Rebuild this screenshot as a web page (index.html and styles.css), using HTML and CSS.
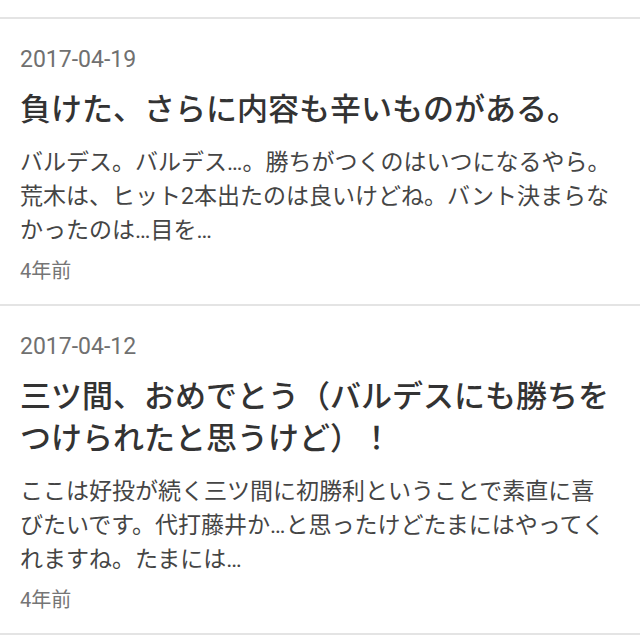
FILE: index.html
```html
<!doctype html>
<html lang="ja">
<head>
    <meta charset="UTF-8">
    <title>記事一覧</title>
    <link rel="stylesheet" href="styles.css">
</head>
<body>
    <div class="top"></div>
    <div class="list">
        <div class="entry">
            <div class="date">2017-04-19</div>
            <h2 class="title">負けた、さらに内容も辛いものがある。</h2>
            <p class="summary">バルデス。バルデス…。勝ちがつくのはいつになるやら。荒木は、ヒット2本出たのは良いけどね。バント決まらなかったのは…目を…</p>
            <div class="ago">4年前</div>
        </div>
        <div class="entry">
            <div class="date">2017-04-12</div>
            <h2 class="title">三ツ間、おめでとう（バルデスにも勝ちをつけられたと思うけど）！</h2>
            <p class="summary">ここは好投が続く三ツ間に初勝利ということで素直に喜びたいです。代打藤井か…と思ったけどたまにはやってくれますね。たまには…</p>
            <div class="ago">4年前</div>
        </div>
    </div>
</body>
</html>
```

FILE: styles.css
```css
* {
    margin: 0;
    padding: 0;
    box-sizing: border-box;
}
body {
    background: #fff;
    font-family: Roboto, 'Noto Sans CJK JP', sans-serif;
    overflow: hidden;
}
.top {
    height: 19px;
    border-bottom: 2px solid #e4e4e4;
}
.entry {
    padding: 26px 24px 18px 20px;
    border-bottom: 2px solid #e4e4e4;
}
.date {
    font-size: 23px;
    line-height: 30px;
    color: #707070;
}
.title {
    margin-top: 14px;
    font-size: 31px;
    font-weight: 500;
    line-height: 42px;
    color: #333;
}
.summary {
    margin-top: 15px;
    font-size: 23px;
    line-height: 34px;
    color: #454545;
}
.ago {
    margin-top: 8px;
    font-size: 20px;
    line-height: 30px;
    color: #757575;
}
```
